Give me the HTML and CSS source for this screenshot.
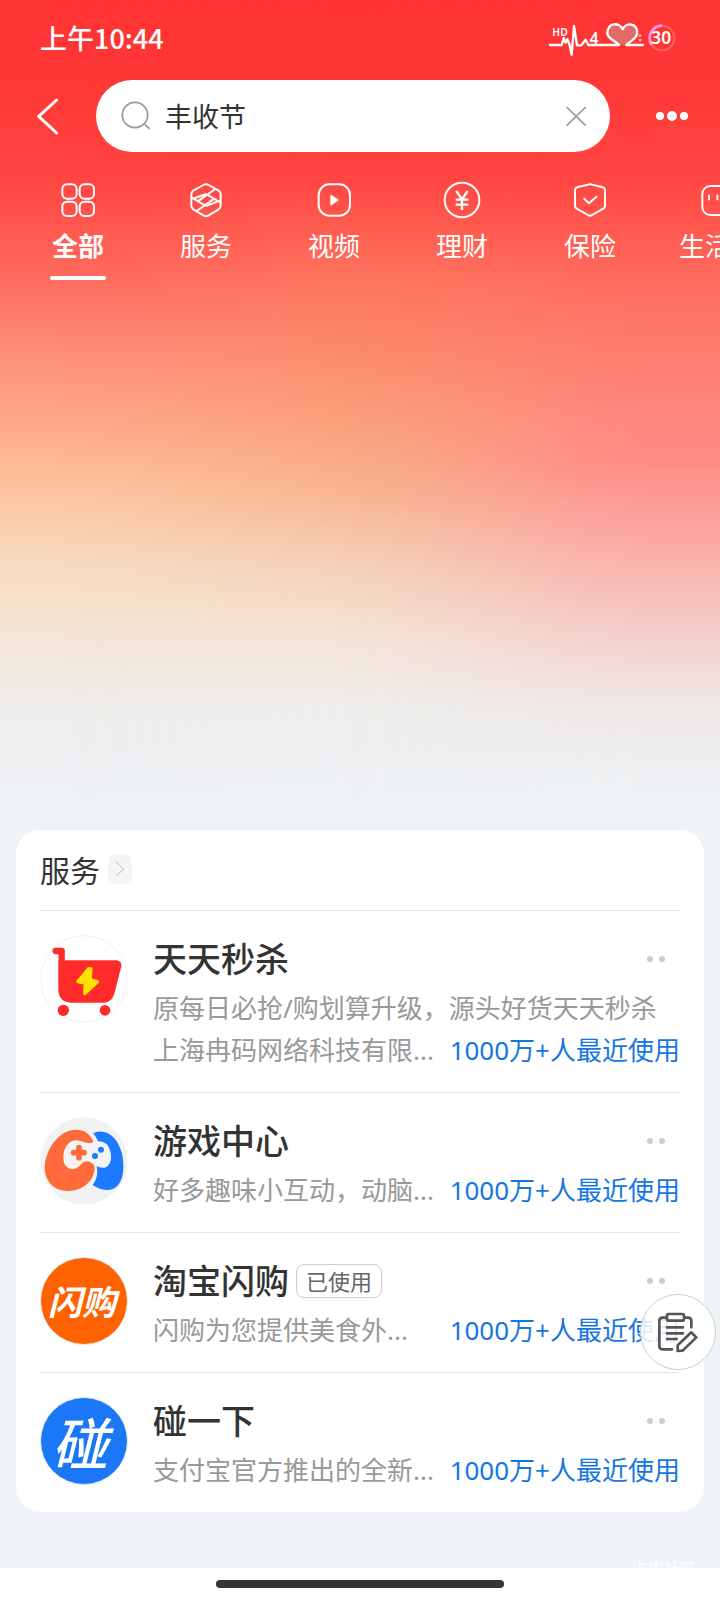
FILE: index.html
```html
<!DOCTYPE html>
<html lang="zh-CN">
<head>
<meta charset="utf-8">
<meta name="viewport" content="width=device-width, initial-scale=1">
<title>丰收节</title>
<link rel="stylesheet" href="styles.css">
</head>
<body>
<div class="page">
  <header class="top">
    <div class="status">
      <span class="time">上午10:44</span>
      <span class="status-icons">
        <svg class="pulse" viewBox="552 54 294 108" aria-hidden="true">
          <path d="M733 95C733 60 770 60 779 82C788 60 826 62 822 95C820 112 800 118 790 128H768C758 116 735 112 733 95Z" fill="#bbb" fill-opacity=".4"/>
          <g fill="none" stroke="#fff" stroke-width="7" stroke-linejoin="round" stroke-linecap="round">
            <path d="M561 129H596L602 108L608 122L613 112L619 126L626 158L633 72L642 130H655L668 113L676 129H768C758 116 735 112 733 95C733 60 770 60 779 82C788 60 826 62 822 95C820 112 800 118 790 129H840"/>
          </g>
          <path d="M826 104l5-9 5 9zM826 112l5 9 5-9z" fill="#fff" fill-opacity=".8"/>
          <text class="pulse-text" x="568" y="102" font-size="31">HD</text>
          <text class="pulse-text" x="680" y="127" font-size="46">4</text>
        </svg>
        <svg class="battery" viewBox="860 75 84 84" role="img" aria-label="30">
          <circle cx="902" cy="117" r="37" fill="none" stroke="#fff" stroke-opacity=".2" stroke-width="7"/>
          <path d="M871 137A37 37 0 0 1 902 80" fill="none" stroke="#ff9cf0" stroke-width="8"/>
          <text class="pulse-text" x="870" y="136" font-size="52">30</text>
        </svg>
      </span>
    </div>
    <div class="searchbar">
      <button class="icon-btn back" aria-label="返回">
        <svg viewBox="102 285 81 120" aria-hidden="true"><path d="M170 297L116 346L170 396" fill="none" stroke="#fff" stroke-width="9" stroke-linecap="round" stroke-linejoin="round"/></svg>
      </button>
      <div class="search">
        <svg class="search-icon" viewBox="360 300 96 96" aria-hidden="true"><g fill="none" stroke="#999" stroke-width="5" stroke-linecap="round"><circle cx="405" cy="345" r="38"/><path d="M432 371L448 386"/></g></svg>
        <input class="search-input" type="text" value="丰收节" aria-label="搜索">
        <button class="icon-btn clear" aria-label="清除"><svg viewBox="611 310 72 72" aria-hidden="true"><path d="M619 319L676 375M676 319L619 375" stroke="#999" stroke-width="5"/></svg></button>
      </div>
      <button class="icon-btn more" aria-label="更多"><svg viewBox="0 0 32 10" aria-hidden="true"><g fill="#fff"><circle cx="4" cy="5" r="4"/><circle cx="16" cy="5" r="5"/><circle cx="28" cy="5" r="4"/></g></svg></button>
    </div>
    <nav class="tabs">
      <a class="tab active" href="#">
        <svg class="tab-icon" viewBox="174 60 120 120" aria-hidden="true"><g fill="none" stroke="#fff" stroke-width="6"><rect x="187" y="73" width="43" height="43" rx="14"/><rect x="239" y="73" width="43" height="43" rx="14"/><rect x="187" y="125" width="43" height="43" rx="14"/><rect x="239" y="125" width="43" height="43" rx="14"/></g></svg>
        <span>全部</span>
      </a>
      <a class="tab" href="#">
        <svg class="tab-icon" viewBox="558 60 120 120" aria-hidden="true"><g fill="none" stroke="#fff" stroke-width="6" stroke-linejoin="round"><path d="M610 75Q618 70 626 75L656 92Q662 96 662 104V136Q662 144 656 148L626 166Q618 171 610 166L580 148Q574 144 574 136V104Q574 96 580 92Z"/><path d="M574 112L618 138M618 102L662 128M646 87L596 122M640 118L590 153M577 117L618 102M618 138L660 122" /></g></svg>
        <span>服务</span>
      </a>
      <a class="tab" href="#">
        <svg class="tab-icon" viewBox="942 60 120 120" aria-hidden="true"><rect x="956" y="73" width="94" height="94" rx="32" fill="none" stroke="#fff" stroke-width="6"/><path d="M993 107V134L1014 120Z" fill="#fff" stroke="#fff" stroke-width="4" stroke-linejoin="round"/></svg>
        <span>视频</span>
      </a>
      <a class="tab" href="#">
        <svg class="tab-icon" viewBox="246 60 120 120" aria-hidden="true"><g fill="none" stroke="#fff" stroke-width="6"><circle cx="306" cy="120" r="52"/><path d="M289 93L306 118L323 93M306 118V150M287 119H325M287 134H325" stroke-width="7"/></g></svg>
        <span>理财</span>
      </a>
      <a class="tab" href="#">
        <svg class="tab-icon" viewBox="630 60 120 120" aria-hidden="true"><g fill="none" stroke="#fff" stroke-width="6" stroke-linejoin="round"><path d="M683 74Q690 71 697 74L729 82Q735 84 735 90V137Q735 143 730 146L696 165Q690 169 684 165L650 146Q645 143 645 137V90Q645 84 651 82Z"/><path d="M671 115L687 130L711 109"/></g></svg>
        <span>保险</span>
      </a>
      <a class="tab" href="#">
        <svg class="tab-icon" viewBox="1014 60 120 120" aria-hidden="true"><g fill="none" stroke="#fff" stroke-width="6"><rect x="1027" y="78" width="94" height="87" rx="24"/><path d="M1047 104V121M1072 104V121"/></g></svg>
        <span>生活号</span>
      </a>
    </nav>
  </header>

  <main class="main">
    <section class="card">
      <h2 class="card-head"><span>服务</span>
        <a class="go" href="#" aria-label="更多服务"><svg viewBox="0 0 24 30" aria-hidden="true"><path d="M8 8L16 15L8 22" fill="none" stroke="#bbb" stroke-width="1"/></svg></a>
      </h2>
      <article class="row">
        <svg class="logo" viewBox="120 344 264 264" aria-hidden="true">
          <circle cx="252" cy="476" r="130" fill="#fff" stroke="#efefef" stroke-width="3"/>
          <path d="M167 392H185V420" fill="none" stroke="#ff2b2b" stroke-width="19" stroke-linecap="round" stroke-linejoin="round"/>
          <path d="M175 420H350Q366 422 364 438L343 520Q335 546 312 547H212Q176 544 175 508Z" fill="#ff2b2b"/>
          <circle cx="190" cy="570" r="17" fill="#ff2b2b"/><circle cx="315" cy="570" r="16" fill="#ff2b2b"/>
          <path d="M266 445L234 484L256 488L254 520L292 484L270 478L273 446Z" fill="#ffe100" stroke="#ffe100" stroke-width="10" stroke-linejoin="round"/>
        </svg>
        <div class="info">
          <div class="title-line"><h3 class="title">天天秒杀</h3><button class="dots" aria-label="更多操作"><i></i><i></i></button></div>
          <p class="desc">原每日必抢/购划算升级，源头好货天天秒杀</p>
          <div class="meta"><span class="desc">上海冉码网络科技有限...</span><span class="used">1000万+人最近使用</span></div>
        </div>
      </article>
      <article class="row">
        <svg class="logo" viewBox="120 110 264 264" aria-hidden="true">
          <circle cx="252" cy="242" r="131" fill="#f2f2f3"/>
          <path d="M280 160C292 150 314 152 331 163C356 180 372 220 370 262C369 306 350 329 320 329C302 328 289 322 278 314C292 294 294 278 290 258C270 240 268 210 296 186C290 174 286 166 280 160Z" fill="#1b7aff"/>
          <path d="M280 184C270 158 250 147 225 148C180 150 138 200 134 260C134 306 165 332 205 332C250 330 284 300 284 262C282 244 262 238 247 245C250 225 262 200 280 184Z" fill="#ff6a3a"/>
          <path d="M190 233C190 202 204 184 225 180C242 178 256 190 274 188C292 182 316 180 326 200C336 222 336 244 324 256C308 270 288 258 276 248C264 240 252 242 245 250C232 266 216 270 204 262C194 256 190 246 190 233Z" fill="#f4f4f5"/>
          <path d="M237 202V232M221 217H252" stroke="#ff6a3a" stroke-width="17" stroke-linecap="round"/>
          <circle cx="303" cy="208" r="9" fill="#1b7aff"/><circle cx="285" cy="227" r="9" fill="#1b7aff"/>
        </svg>
        <div class="info">
          <div class="title-line"><h3 class="title">游戏中心</h3><button class="dots" aria-label="更多操作"><i></i><i></i></button></div>
          <div class="meta"><span class="desc">好多趣味小互动，动脑...</span><span class="used">1000万+人最近使用</span></div>
        </div>
      </article>
      <article class="row">
        <div class="logo logo-orange" aria-hidden="true">闪购</div>
        <div class="info">
          <div class="title-line"><h3 class="title">淘宝闪购</h3><span class="tag">已使用</span><button class="dots" aria-label="更多操作"><i></i><i></i></button></div>
          <div class="meta"><span class="desc">闪购为您提供美食外...</span><span class="used">1000万+人最近使用</span></div>
        </div>
      </article>
      <article class="row">
        <div class="logo logo-blue" aria-hidden="true">碰</div>
        <div class="info">
          <div class="title-line"><h3 class="title">碰一下</h3><button class="dots" aria-label="更多操作"><i></i><i></i></button></div>
          <div class="meta"><span class="desc">支付宝官方推出的全新...</span><span class="used">1000万+人最近使用</span></div>
        </div>
      </article>
    </section>
  </main>

  <footer class="homebar"><span class="watermark">卡农社区</span><span class="pill"></span></footer>
</div>
<button class="float" aria-label="反馈">
  <svg viewBox="890 690 132 132" aria-hidden="true"><g fill="none" stroke="#555" stroke-width="8" stroke-linejoin="round" stroke-linecap="round"><path d="M922 713H910Q900 713 900 723V798Q900 808 910 808H938M975 713H986Q996 713 996 723V742"/><rect x="923" y="702" width="51" height="20" rx="5"/><path d="M923 742H971M923 760H971M923 777H952"/><path d="M955 796L996 757L1011 772L970 812L955 813Z"/></g></svg>
</button>
</body>
</html>
```
FILE: styles.css
```css
* { box-sizing: border-box; }

body {
  margin: 0;
  background: #eff3f8;
  color: #333;
  font-family: "Noto Sans CJK SC", "Noto Sans", sans-serif;
}

button { margin: 0; padding: 0; border: 0; background: none; font: inherit; cursor: pointer; }
a { color: inherit; text-decoration: none; }
h2, h3, p { margin: 0; }
svg { display: block; }

.page {
  position: relative;
  isolation: isolate;
  display: flex;
  flex-direction: column;
  min-height: 100vh;
  overflow: hidden;
  background: linear-gradient(#ff3434 0, #ff3737 80px, #ff4642 180px, #ff6c5f 280px, #fe8e79 351px, #fea988 423px, #fdc5a0 494px, #f7dcc0 566px, #f3e5d6 637px, #eeeeec 709px, #eef0f3 775px, #eff3f8 815px);
}

/* Colour washes over the centre and the right of the backdrop */
.page::before,
.page::after {
  content: "";
  position: absolute;
  inset: 0 0 auto;
  z-index: -1;
  height: 815px;
}
.page::before {
  background: linear-gradient(#ff3434 0, #ff3737 80px, #ff4642 180px, #ff765f 280px, #fc8a6a 351px, #f9a07a 423px, #f7b590 494px, #f5d0b8 566px, #f4e3d6 637px, #eeeeec 709px, #eef0f3 775px, #eff3f8 815px);
  mask-image: linear-gradient(to right, transparent 8%, rgba(0, 0, 0, .12) 18%, rgba(0, 0, 0, .5) 32%, rgba(0, 0, 0, .88) 46%, #000 56%);
}
.page::after {
  background: linear-gradient(#ff3434 0, #ff3737 80px, #ff4642 180px, #ff6c5e 280px, #ff7d6f 351px, #ff887f 423px, #ff8b85 460px, #fd9893 494px, #f9b3ae 566px, #f4d0cc 637px, #eee8e6 709px, #eef0f2 775px, #eff3f8 815px);
  mask-image: linear-gradient(to right, transparent 46%, rgba(0, 0, 0, .12) 56%, rgba(0, 0, 0, .5) 69%, rgba(0, 0, 0, .88) 81%, #000 90%);
}

.top { color: #fff; }

.status {
  display: flex;
  align-items: center;
  justify-content: space-between;
  height: 80px;
  padding: 0 44px 4px 40px;
}
.time { font-size: 27px; font-weight: 500; line-height: 40px; }
.status-icons { display: flex; align-items: center; gap: 3px; }
.pulse { width: 98px; height: 36px; }
.battery { width: 28px; height: 28px; }
.pulse-text { fill: #fff; font-family: "Noto Sans", sans-serif; font-weight: 600; }

.searchbar { display: flex; align-items: center; height: 72px; padding: 0 30px; }
.icon-btn { display: flex; align-items: center; justify-content: center; flex: none; }
.back { width: 34px; height: 72px; margin-right: 32px; }
.back svg { width: 27px; height: 40px; }
.search {
  display: flex;
  align-items: center;
  flex: 1;
  min-width: 0;
  height: 72px;
  padding: 0 22px 0 24px;
  border-radius: 36px;
  background: #fff;
}
.search-icon { flex: none; width: 32px; height: 32px; }
.search-input {
  flex: 1;
  min-width: 0;
  height: 48px;
  padding: 0 0 2px 13px;
  border: 0;
  outline: 0;
  background: none;
  color: #333;
  font: 400 27px/46px "Noto Sans CJK SC", sans-serif;
}
.clear svg { width: 24px; height: 24px; }
.more { width: 36px; height: 72px; margin-left: 44px; }
.more svg { width: 32px; height: 10px; }

.tabs { display: flex; padding: 28px 0 0 14px; overflow: hidden; }
.tab {
  display: flex;
  flex: 0 0 128px;
  flex-direction: column;
  align-items: center;
  gap: 7px;
  font-size: 26px;
  line-height: 36px;
}
.tab-icon { width: 40px; height: 40px; }
.active { font-weight: 700; }
.active::after { content: ""; width: 56px; height: 4px; margin-top: 6px; border-radius: 2px; background: #fff; }

.main { padding: 550px 16px 56px; }
.card { padding: 0 24px; border-radius: 24px; background: #fff; }
.card-head {
  display: flex;
  align-items: center;
  gap: 8px;
  height: 81px;
  padding-bottom: 2px;
  border-bottom: 1px solid #e8e8e8;
  font-size: 30px;
  font-weight: 400;
}
.go { border-radius: 8px; background: #f5f5f5; }
.go svg { width: 24px; height: 30px; }

.row { display: flex; gap: 25px; padding: 24px 0 21px; border-bottom: 1px solid #e8e8e8; }
.row:last-child { border-bottom: 0; }
.logo { flex: none; width: 88px; height: 88px; border-radius: 50%; }
.logo-orange,
.logo-blue {
  display: flex;
  align-items: center;
  justify-content: center;
  border: 1px solid #e6eef5;
  color: #fff;
  font-style: italic;
  line-height: 1;
}
.logo-orange { padding-right: 4px; background: #ff6200; font-size: 34px; font-weight: 700; }
.logo-blue { padding-right: 8px; background: #1a77f5; font-size: 56px; font-weight: 500; }

.info { display: flex; flex: 1; flex-direction: column; min-width: 0; }
.title-line { display: flex; align-items: center; height: 48px; margin-bottom: 4px; }
.title { font-size: 34px; font-weight: 500; line-height: 46px; padding-bottom: 2px; white-space: nowrap; }
.tag {
  margin-left: 7px;
  padding: 0 9px 2px;
  border: 1px solid #ccc;
  border-radius: 8px;
  color: #666;
  font-size: 22px;
  line-height: 30px;
  white-space: nowrap;
}
.dots { display: flex; gap: 6px; margin-left: auto; padding: 12px 15px 12px 12px; }
.dots i { width: 6px; height: 6px; border-radius: 50%; background: #ccc; }
.meta { display: flex; justify-content: space-between; gap: 10px; }
.desc,
.used {
  font-family: "Noto Sans", "Noto Sans CJK SC", sans-serif;
  font-size: 26px;
  line-height: 42px;
  white-space: nowrap;
}
.desc {
  min-width: 0;
  overflow: hidden;
  color: #999;
  text-overflow: ellipsis;
}
.used { flex: none; color: #1677e0; }

.homebar {
  position: relative;
  display: flex;
  align-items: center;
  justify-content: center;
  height: 32px;
  margin-top: auto;
  background: #fff;
}
.pill { width: 40%; height: 8px; border-radius: 4px; background: #333; }
.watermark {
  position: absolute;
  top: -12px;
  right: 24px;
  color: #fff;
  font-size: 16px;
  line-height: 24px;
}

.float {
  position: fixed;
  right: 4px;
  bottom: 230px;
  display: flex;
  align-items: center;
  justify-content: center;
  width: 76px;
  height: 76px;
  border: 1px solid #ccc;
  border-radius: 50%;
  background: rgba(255, 255, 255, .85);
}
.float svg { width: 44px; height: 44px; }
```
